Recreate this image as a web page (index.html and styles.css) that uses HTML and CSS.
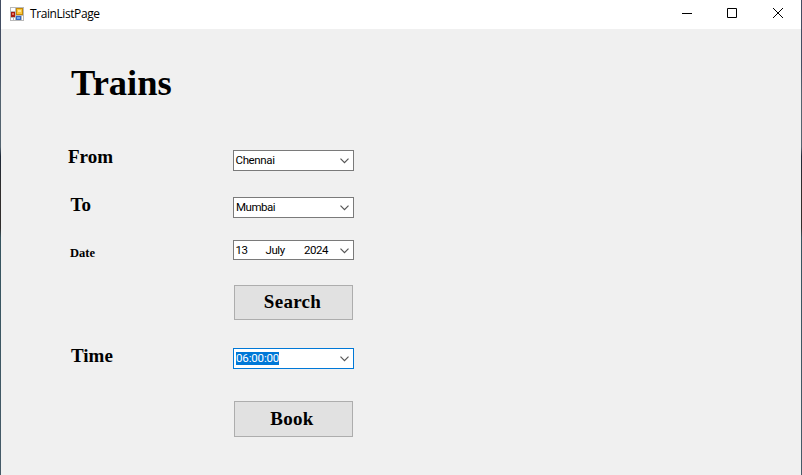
FILE: index.html
```html
<!DOCTYPE html>
<html lang="en">
<head>
<meta charset="utf-8">
<title>TrainListPage</title>
<link rel="stylesheet" href="styles.css">
</head>
<body>
<div class="window">
  <header class="titlebar">
    <svg class="app-icon" width="14" height="14" viewBox="0 0 14 14" shape-rendering="crispEdges">
      <path fill="#b9b9b9" d="M0 0h14v14H0z"/>
      <path fill="#fff" d="M1 1h4v3H1zM1 11h2v2H1zM4 11h1v2H4zM12 9h1v4h-1z"/>
      <path fill="#a81d10" d="M1 5h4v5H1z"/>
      <path fill="#e8705c" d="M2 6h2v2H2z"/>
      <path fill="#c48a08" d="M6 1h7v7H6z"/>
      <path fill="#fbc63c" d="M7 2h5v5H7z"/>
      <path fill="#ffe695" d="M8 3h3v2H8z"/>
      <path fill="#3469c5" d="M6 9h5v4H6z"/>
      <path fill="#75a9ef" d="M7 10h3v2H7z"/>
    </svg>
    <span class="title">TrainListPage</span>
    <div class="controls">
      <svg width="10" height="10" viewBox="0 0 10 10"><path d="M0 5.5h10"/></svg>
      <svg width="10" height="10" viewBox="0 0 10 10"><path d="M.5.5h9v9h-9z"/></svg>
      <svg width="10" height="10" viewBox="0 0 10 10"><path d="M0 0l10 10M10 0L0 10"/></svg>
    </div>
  </header>
  <main class="content">
    <h1 class="heading">Trains</h1>
    <form class="form">
      <div class="row row-from">
        <label class="label from">From</label>
        <div class="combo"><span class="value chennai">Chennai</span><svg class="chevron" width="9" height="6" viewBox="0 0 9 6"><path d="M.5.7l4 4 4-4"/></svg></div>
      </div>
      <div class="row row-to">
        <label class="label to">To</label>
        <div class="combo"><span class="value mumbai">Mumbai</span><svg class="chevron" width="9" height="6" viewBox="0 0 9 6"><path d="M.5.7l4 4 4-4"/></svg></div>
      </div>
      <div class="row row-date">
        <label class="label date">Date</label>
        <div class="combo picker"><span class="day">13</span><span class="month">July</span><span class="year">2024</span><svg class="chevron" width="9" height="6" viewBox="0 0 9 6"><path d="M.5.7l4 4 4-4"/></svg></div>
      </div>
      <button class="button search" type="button">Search</button>
      <div class="row row-time">
        <label class="label time">Time</label>
        <div class="combo focused"><span class="value selected">06:00:00</span><svg class="chevron" width="9" height="6" viewBox="0 0 9 6"><path d="M.5.7l4 4 4-4"/></svg></div>
      </div>
      <button class="button book" type="button">Book</button>
    </form>
  </main>
</div>
</body>
</html>
```
FILE: styles.css
```css
* { box-sizing: border-box; }
body { margin: 0; background: #f0f0f0; color: #000; }
.window {
  width: 802px;
  height: 475px;
  overflow: hidden;
  border-left: 1px solid;
  border-right: 1px solid #696969;
  border-image: linear-gradient(#424d62 0 14%, #53636f 20% 31%, #1d2838 33%, #302d2c 40% 48%, #35545f 50%, #465a68) 1;
  border-image-width: 0 1px;
}
.titlebar {
  display: flex;
  align-items: center;
  height: 29px;
  padding: 0 18px 2px 9px;
  background: #fff;
}
.app-icon { display: block; }
.title {
  margin-left: 6px;
  padding-top: 1px;
  font: 12px/16px "Open Sans", sans-serif;
  letter-spacing: -0.42px;
}
.controls { display: flex; margin-left: auto; margin-top: -1px; }
.controls svg { display: block; margin-left: 35px; fill: none; stroke: #000; stroke-width: 1; }
.controls svg:last-child { margin-left: 36px; }
.content { height: 446px; padding-top: 31px; }
.heading {
  height: 46px;
  margin: 0 0 0 70px;
  font: bold 36.5px/46px "Liberation Serif", serif;
}
.form { padding-top: 44px; }
.row { display: flex; height: 21px; }
.row-to { margin-top: 26px; }
.row-date { margin-top: 22px; height: 20px; }
.row-time { margin-top: 28px; }
.label {
  width: 232px;
  font: bold 19px/21px "Liberation Serif", serif;
  margin-top: -4px;
}
.from { padding-left: 67px; }
.to { padding-left: 69.5px; margin-top: -3px; }
.date { padding-left: 69px; font-size: 12.5px; margin-top: 3px; }
.time { padding-left: 70px; margin-top: -3px; }
.combo {
  display: flex;
  align-items: center;
  width: 121px;
  height: 100%;
  padding: 0 4px 1px 2px;
  border: 1px solid #7a7a7a;
  background: #fff;
  font: 11.5px/13px Roboto, sans-serif;
  letter-spacing: -0.35px;
  white-space: nowrap;
}
.focused { border-color: #0078d7; }
.chevron { position: relative; top: 1px; margin-left: auto; fill: none; stroke: #555; stroke-width: 1.2; }
.chennai { margin-left: -0.5px; }
.mumbai { letter-spacing: -0.5px; }
.selected { background: #0078d7; color: #fff; letter-spacing: -0.15px; }
.picker span { padding-top: 1px; }
.day { width: 30px; margin-left: -0.5px; }
.month { width: 38.5px; letter-spacing: -0.45px; }
.year { letter-spacing: -0.45px; }
.button {
  display: block;
  width: 119px;
  margin-left: 233px;
  padding: 0 2px 2px 0;
  border: 1px solid #adadad;
  background: #e1e1e1;
  color: #000;
  font: bold 19px/21px "Liberation Serif", serif;
  letter-spacing: 0.3px;
}
.search { height: 35px; margin-top: 25px; }
.book { height: 36px; margin-top: 32px; padding-right: 3px; }
```
